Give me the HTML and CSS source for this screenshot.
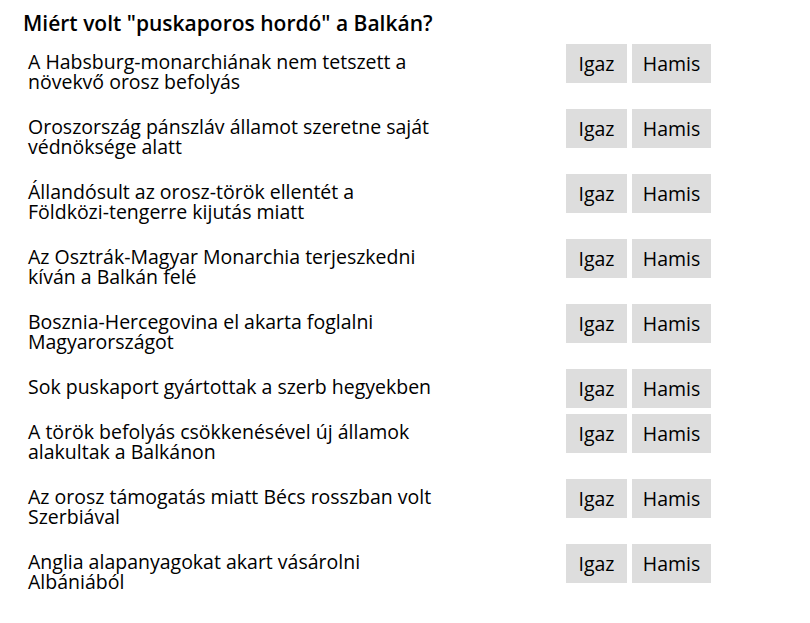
FILE: index.html
```html
<!DOCTYPE html>
<html lang="hu">
<head>
<meta charset="utf-8">
<link rel="stylesheet" href="styles.css">
</head>
<body>
<div class="quiz">
  <h1 class="title">Miért volt "puskaporos hordó" a Balkán?</h1>
  <div class="rows">
    <div class="row"><div class="stmt">A Habsburg-monarchiának nem tetszett a növekvő orosz befolyás</div><div class="btns"><button class="btn btn-true">Igaz</button><button class="btn btn-false">Hamis</button></div></div>
    <div class="row"><div class="stmt">Oroszország pánszláv államot szeretne saját védnöksége alatt</div><div class="btns"><button class="btn btn-true">Igaz</button><button class="btn btn-false">Hamis</button></div></div>
    <div class="row"><div class="stmt">Állandósult az orosz-török ellentét a Földközi-tengerre kijutás miatt</div><div class="btns"><button class="btn btn-true">Igaz</button><button class="btn btn-false">Hamis</button></div></div>
    <div class="row"><div class="stmt">Az Osztrák-Magyar Monarchia terjeszkedni kíván a Balkán felé</div><div class="btns"><button class="btn btn-true">Igaz</button><button class="btn btn-false">Hamis</button></div></div>
    <div class="row"><div class="stmt">Bosznia-Hercegovina el akarta foglalni Magyarországot</div><div class="btns"><button class="btn btn-true">Igaz</button><button class="btn btn-false">Hamis</button></div></div>
    <div class="row"><div class="stmt">Sok puskaport gyártottak a szerb hegyekben</div><div class="btns"><button class="btn btn-true">Igaz</button><button class="btn btn-false">Hamis</button></div></div>
    <div class="row"><div class="stmt">A török befolyás csökkenésével új államok alakultak a Balkánon</div><div class="btns"><button class="btn btn-true">Igaz</button><button class="btn btn-false">Hamis</button></div></div>
    <div class="row"><div class="stmt">Az orosz támogatás miatt Bécs rosszban volt Szerbiával</div><div class="btns"><button class="btn btn-true">Igaz</button><button class="btn btn-false">Hamis</button></div></div>
    <div class="row"><div class="stmt">Anglia alapanyagokat akart vásárolni Albániából</div><div class="btns"><button class="btn btn-true">Igaz</button><button class="btn btn-false">Hamis</button></div></div>
  </div>
</div>
</body>
</html>
```

FILE: styles.css
```css
html, body {
  margin: 0;
  padding: 0;
  background: #ffffff;
}

body {
  font-family: "Open Sans", "Noto Sans", "Liberation Sans", sans-serif;
  color: #000000;
}

.quiz {
  width: 688px;
  padding: 10px 0 40px 23px;
}

.title {
  margin: 0;
  font-size: 21px;
  line-height: 26px;
  font-weight: 600;
}

.rows {
  display: flex;
  flex-direction: column;
  gap: 25px;
  margin-top: 16px;
}

.row {
  display: flex;
  align-items: flex-start;
  padding-left: 5px;
}

.stmt {
  width: 408px;
  font-size: 19.5px;
  line-height: 20px;
}

.btns {
  display: flex;
  gap: 5px;
  margin-left: auto;
  margin-top: -8px;
  margin-bottom: -19px;
}

.btn {
  height: 39px;
  padding: 0;
  border: none;
  background: #dddddd;
  color: #000000;
  font-family: inherit;
  font-size: 19.5px;
  cursor: pointer;
}

.btn-true {
  width: 61px;
}

.btn-false {
  width: 79px;
}
```
